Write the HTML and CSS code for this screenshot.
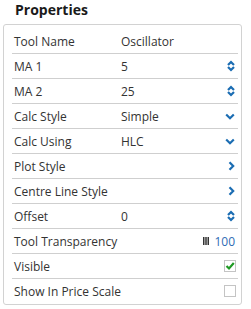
FILE: index.html
```html
<!DOCTYPE HTML>
<html>
	<head>
		<link rel="stylesheet" href="styles.css">
	</head>
	<body>
		<h1 class="title">Properties</h1>
		<div class="panel">
			<div class="row"><span class="label">Tool Name</span><span class="value">Oscillator</span><span class="ctl"></span></div>
			<div class="row"><span class="label">MA 1</span><span class="value">5</span>
				<span class="ctl"><svg width="8" height="12" viewBox="0 0 8 12"><path d="M1 5 L4 2 L7 5 M1 7 L4 10 L7 7" class="ico"/></svg></span></div>
			<div class="row"><span class="label">MA 2</span><span class="value">25</span>
				<span class="ctl"><svg width="8" height="12" viewBox="0 0 8 12"><path d="M1 5 L4 2 L7 5 M1 7 L4 10 L7 7" class="ico"/></svg></span></div>
			<div class="row"><span class="label">Calc Style</span><span class="value">Simple</span>
				<span class="ctl"><svg width="10" height="7" viewBox="0 0 10 7"><path d="M1.2 1.5 L5 5.2 L8.8 1.5" class="ico"/></svg></span></div>
			<div class="row"><span class="label">Calc Using</span><span class="value">HLC</span>
				<span class="ctl"><svg width="10" height="7" viewBox="0 0 10 7"><path d="M1.2 1.5 L5 5.2 L8.8 1.5" class="ico"/></svg></span></div>
			<div class="row"><span class="label">Plot Style</span><span class="value"></span>
				<span class="ctl"><svg width="7" height="10" viewBox="0 0 7 10"><path d="M1.5 1.2 L5.2 5 L1.5 8.8" class="ico"/></svg></span></div>
			<div class="row"><span class="label">Centre Line Style</span><span class="value"></span>
				<span class="ctl"><svg width="7" height="10" viewBox="0 0 7 10"><path d="M1.5 1.2 L5.2 5 L1.5 8.8" class="ico"/></svg></span></div>
			<div class="row"><span class="label">Offset</span><span class="value">0</span>
				<span class="ctl"><svg width="8" height="12" viewBox="0 0 8 12"><path d="M1 5 L4 2 L7 5 M1 7 L4 10 L7 7" class="ico"/></svg></span></div>
			<div class="row"><span class="label">Tool Transparency</span><span class="value"></span>
				<span class="ctl"><svg class="bars" width="6" height="8" viewBox="0 0 6 8"><rect x="0" y="0" width="1.5" height="8"/><rect x="2.25" y="0" width="1.5" height="8"/><rect x="4.5" y="0" width="1.5" height="8"/></svg><span class="pct">100</span></span></div>
			<div class="row"><span class="label">Visible</span><span class="value"></span>
				<span class="ctl"><span class="check"><svg width="10" height="10" viewBox="0 0 10 10"><path d="M1.5 5 L4 7.5 L8.8 2" class="tick"/></svg></span></span></div>
			<div class="row"><span class="label">Show In Price Scale</span><span class="value"></span>
				<span class="ctl"><span class="check"></span></span></div>
		</div>
	</body>
</html>
```
FILE: styles.css
```css
body {
	margin: 0;
	background: #fff;
	font-family: "Open Sans", "DejaVu Sans", sans-serif;
	color: #333;
}

.title {
	margin: 0;
	padding-left: 15px;
	font-size: 14px;
	line-height: 19px;
	font-weight: bold;
	color: #1a1a1a;
}

.panel {
	margin: 5px 0 0 3px;
	width: 237px;
	border: 1px solid #d2d2d2;
	border-radius: 3px;
	padding: 4px 0 1px 0;
	box-sizing: content-box;
}

.row {
	display: grid;
	grid-template-columns: 107px 1fr auto;
	align-items: center;
	height: 24px;
	margin: 0 3px 0 8px;
	padding: 0 3px 0 2px;
	border-bottom: 1px solid #cfcfcf;
	font-size: 12px;
}

.row:last-child {
	border-bottom: none;
}

.ctl {
	display: flex;
	align-items: center;
}

.ico {
	fill: none;
	stroke: #1b6db3;
	stroke-width: 2.2;
}

.bars {
	fill: #333;
	margin-right: 5px;
}

.pct {
	color: #2e6cb5;
}

.check {
	display: flex;
	align-items: center;
	justify-content: center;
	width: 10px;
	height: 10px;
	border: 1px solid #c4c4c4;
	background: #fff;
	margin-right: -1px;
}

.tick {
	fill: none;
	stroke: #1f9a24;
	stroke-width: 2.2;
}
```
